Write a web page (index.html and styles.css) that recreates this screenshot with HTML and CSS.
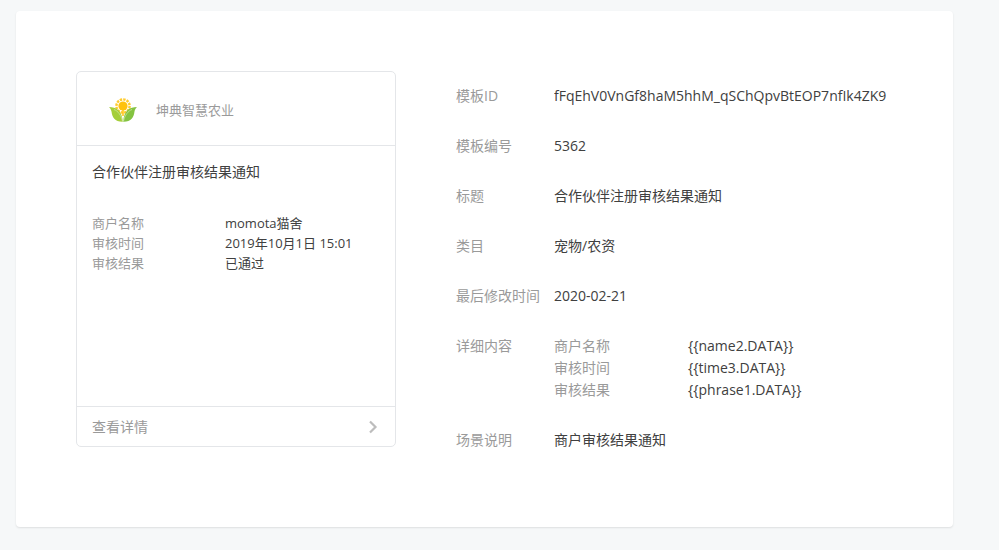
FILE: index.html
```
<!DOCTYPE html>
<html lang="zh-CN">
<head>
    <meta charset="UTF-8">
    <meta name="viewport" content="width=device-width, initial-scale=1.0">
    <title>模板详情</title>
    <link rel="stylesheet" href="styles.css">
</head>
<body>
    <main class="panel">
        <!-- Message preview -->
        <section class="card">
            <div class="card-header">
                <svg class="logo" viewBox="0 0 28 24" aria-hidden="true">
                    <circle cx="14" cy="8" r="6.6" fill="none" stroke="#ffcb2e" stroke-width="2.4" stroke-dasharray="2.4 1.056"/>
                    <circle cx="14" cy="8" r="4.6" fill="#ffc20e"/>
                    <path d="M14 12V18" stroke="#ffc71f" stroke-width="1.6"/>
                    <path d="M0 9C7 9 13 12 13.8 23.8C6 24 3 19 2.6 14C2.2 12 1.4 10.4 0 9Z" fill="#a5ce39"/>
                    <path d="M28 9C21 9 15 12 14.2 23.8C22 24 25 19 25.4 14C25.8 12 26.6 10.4 28 9Z" fill="#84c341"/>
                    <path d="M5 11.5C9 13 12 17 13.5 23M23 11.5C19 13 16 17 14.5 23" fill="none" stroke="#d3eaa8" stroke-width="0.7"/>
                </svg>
                <span class="account">坤典智慧农业</span>
            </div>
            <div class="card-body">
                <h1 class="card-title">合作伙伴注册审核结果通知</h1>
                <dl class="pairs">
                    <dt>商户名称</dt>
                    <dd>momota猫舍</dd>
                    <dt>审核时间</dt>
                    <dd>2019年10月1日 15:01</dd>
                    <dt>审核结果</dt>
                    <dd>已通过</dd>
                </dl>
            </div>
            <a class="card-footer" href="#">
                <span>查看详情</span>
                <svg class="arrow" viewBox="0 0 10 14" aria-hidden="true">
                    <path d="M2 1.5L7.5 7L2 12.5" fill="none" stroke="#bdbdbd" stroke-width="2.2"/>
                </svg>
            </a>
        </section>

        <!-- Template info -->
        <dl class="info">
            <dt>模板ID</dt>
            <dd>fFqEhV0VnGf8haM5hhM_qSChQpvBtEOP7nfIk4ZK9</dd>
            <dt>模板编号</dt>
            <dd>5362</dd>
            <dt>标题</dt>
            <dd>合作伙伴注册审核结果通知</dd>
            <dt>类目</dt>
            <dd>宠物/农资</dd>
            <dt>最后修改时间</dt>
            <dd>2020-02-21</dd>
            <dt>详细内容</dt>
            <dd>
                <dl class="pairs">
                    <dt>商户名称</dt>
                    <dd>{{name2.DATA}}</dd>
                    <dt>审核时间</dt>
                    <dd>{{time3.DATA}}</dd>
                    <dt>审核结果</dt>
                    <dd>{{phrase1.DATA}}</dd>
                </dl>
            </dd>
            <dt>场景说明</dt>
            <dd>商户审核结果通知</dd>
        </dl>
    </main>
</body>
</html>
```
FILE: styles.css
```
* {
    box-sizing: border-box;
}
body {
    margin: 0;
    padding: 11px 46px 23px 16px;
    background-color: #f6f8f9;
    color: #404040;
    font-family: "Open Sans", "Noto Sans CJK SC", sans-serif;
    font-size: 14px;
    line-height: 22px;
}
dl, dd, h1 {
    margin: 0;
}
dt {
    color: #9a9a9a;
}

.panel {
    display: flex;
    align-items: flex-start;
    gap: 60px;
    padding: 60px 60px 76px;
    background-color: #fff;
    border-radius: 4px;
    box-shadow: 0 1px 2px rgba(0, 0, 0, 0.1);
}

/* Message preview */
.card {
    flex: 0 0 320px;
    border: 1px solid #e4e6e9;
    border-radius: 5px;
}
.card-header {
    display: flex;
    align-items: center;
    gap: 19px;
    height: 74px;
    padding: 3px 32px 0;
    border-bottom: 1px solid #e4e6e9;
}
.logo {
    width: 28px;
    height: 24px;
}
.account {
    color: #9a9a9a;
    font-size: 13px;
}
.card-body {
    min-height: 260px;
    padding: 15px;
}
.card-title {
    margin-bottom: 30px;
    font-size: 14px;
    font-weight: 400;
}
.pairs {
    display: grid;
    grid-template-columns: 134px 1fr;
}
.card .pairs {
    grid-template-columns: 133px 1fr;
    font-size: 13px;
    line-height: 20px;
}
.card-footer {
    display: flex;
    align-items: center;
    justify-content: space-between;
    height: 40px;
    padding: 0 17px 0 15px;
    border-top: 1px solid #e4e6e9;
    color: #9a9a9a;
    text-decoration: none;
}
.arrow {
    width: 10px;
    height: 14px;
}

/* Template info */
.info {
    flex: 1;
    min-width: 0;
    display: grid;
    grid-template-columns: 84px minmax(0, 1fr);
    gap: 28px 14px;
    padding-top: 14px;
}
.info > dd {
    overflow: hidden;
    white-space: nowrap;
}
```
